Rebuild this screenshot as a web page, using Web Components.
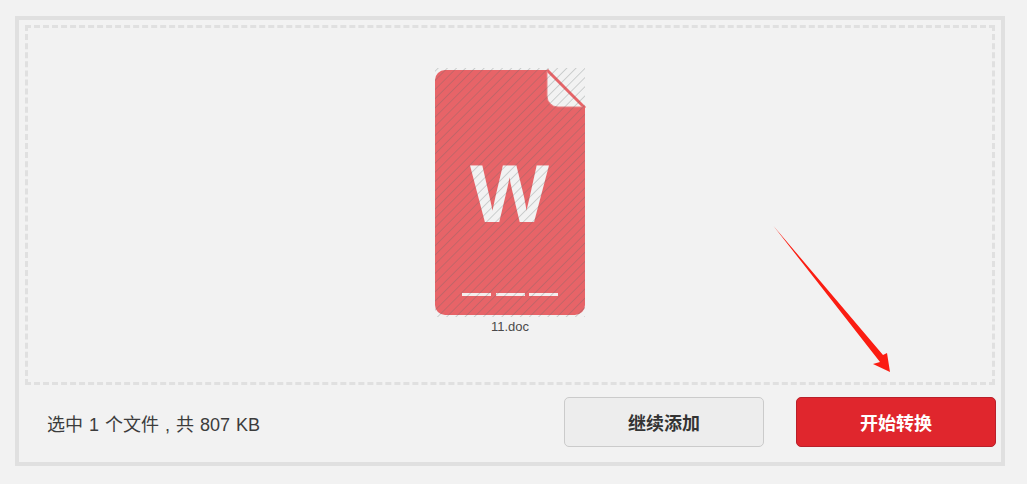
<!DOCTYPE html>
<html lang="zh-CN">
<head>
<meta charset="UTF-8">
<title>文件转换</title>
<style>
    html, body { margin: 0; background: #f2f2f2; }
    body { font-family: "Liberation Sans", "Noto Sans CJK SC", sans-serif; color: #333; }
</style>
</head>
<body>
<convert-panel>
    <file-tile slot="zone" name="11.doc"></file-tile>
    <span slot="status">选中 1 个文件 , 共 807 KB</span>
    <pick-button slot="actions">继续添加</pick-button>
    <pick-button slot="actions" primary>开始转换</pick-button>
    <red-arrow slot="over"></red-arrow>
</convert-panel>

<script>
class ConvertPanel extends HTMLElement {
    constructor() {
        super();
        let shadow = this.attachShadow({mode: 'open'});
        shadow.innerHTML = `
        <style>
        :host { display: block; position: relative; box-sizing: border-box; width: 990px; height: 450px; margin: 16px 0 0 15px; border: 4px solid #e0e0e0; }
        .zone { box-sizing: border-box; height: 360px; margin: 5px 6px 0; border: 3px dashed #e0e0e0; display: flex; flex-direction: column; align-items: center; padding-top: 40px; }
        .bar { display: flex; align-items: center; padding: 12px 5px 0 28px; }
        .status { flex: 1; font-size: 18px; color: #3c3c3c; word-spacing: 1px; padding-top: 1px; }
        .actions { display: flex; gap: 32px; }
        </style>
        <div class="zone"><slot name="zone"></slot></div>
        <div class="bar">
            <div class="status"><slot name="status"></slot></div>
            <div class="actions"><slot name="actions"></slot></div>
        </div>
        <slot name="over"></slot>`;
    }
}
customElements.define("convert-panel", ConvertPanel);

class FileTile extends HTMLElement {
    constructor() {
        super();
        let shadow = this.attachShadow({mode: 'open'});
        shadow.innerHTML = `
        <style>
        :host { display: flex; flex-direction: column; align-items: center; }
        svg { display: block; }
        .name { font-size: 13px; line-height: 16px; margin-top: 1px; color: #4a4a4a; }
        .w { font: bold 81px "Liberation Sans", sans-serif; }
        </style>
        <svg width="152" height="250" viewBox="434 68 152 250">
            <defs>
                <pattern id="hatch" width="6.5" height="6.5" patternUnits="userSpaceOnUse" patternTransform="rotate(45)">
                    <rect width="0.8" height="6.5" fill="#5f6666" opacity="0.32"/>
                </pattern>
            </defs>
            <path d="M445 70H547L585 108V305a10 10 0 0 1-10 10H445a10 10 0 0 1-10-10V80a10 10 0 0 1 10-10Z" fill="#e76468"/>
            <path d="M547 70V96a11 11 0 0 0 11 11H585Z" fill="#f2f2f2"/>
            <path d="M547 70L585 108" stroke="#e76468" stroke-width="3" fill="none"/>
            <path d="M547 71V96a11 11 0 0 0 11 11H583" stroke="#ea8083" stroke-width="1" fill="none"/>
            <text class="w" x="470" y="222" textLength="79" lengthAdjust="spacingAndGlyphs" fill="#f2f2f2">W</text>
            <g fill="#f4eded">
                <rect x="462" y="293" width="29" height="3"/>
                <rect x="496" y="293" width="29" height="3"/>
                <rect x="529" y="293" width="29" height="3"/>
            </g>
            <rect x="435" y="68" width="150" height="249" fill="url(#hatch)"/>
        </svg>
        <div class="name"></div>`;
        shadow.querySelector(".name").textContent = this.getAttribute("name");
    }
}
customElements.define("file-tile", FileTile);

class PickButton extends HTMLElement {
    constructor() {
        super();
        let shadow = this.attachShadow({mode: 'open'});
        shadow.innerHTML = `
        <style>
        :host { display: flex; align-items: center; justify-content: center; box-sizing: border-box; width: 200px; height: 50px; border: 1px solid #cbcbcb; border-radius: 5px; background: #ededed; color: #333; font-size: 18px; font-weight: bold; }
        :host([primary]) { background: #e0262d; border-color: #b9202a; color: #fff; }
        </style>
        <slot></slot>`;
    }
}
customElements.define("pick-button", PickButton);

class RedArrow extends HTMLElement {
    constructor() {
        super();
        let shadow = this.attachShadow({mode: 'open'});
        // laid over the drop zone, panel padding box starts at 19,20
        shadow.innerHTML = `
        <style>
        :host { position: absolute; left: 751px; top: 202px; width: 130px; height: 150px; }
        svg { display: block; }
        </style>
        <svg width="130" height="150" viewBox="770 222 130 150">
            <path d="M773.500 226L883 355L887 353L890 372L873 364L880 362Z" fill="#fb1d12"/>
        </svg>`;
    }
}
customElements.define("red-arrow", RedArrow);
</script>
</body>
</html>
